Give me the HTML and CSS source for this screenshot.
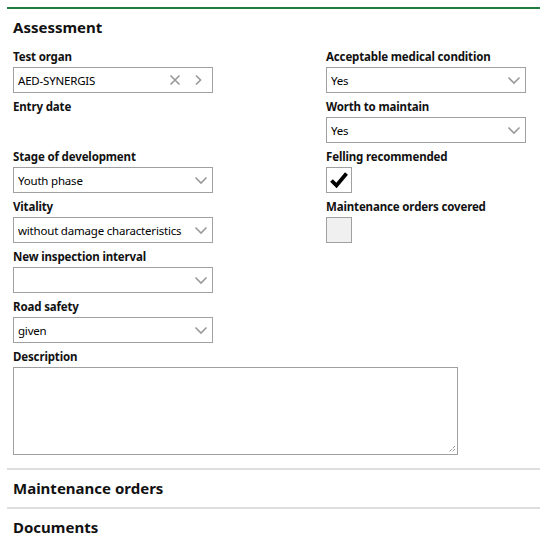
FILE: index.html
```html
<!DOCTYPE html>
<html>
<head>
<meta charset="utf-8">
<link rel="stylesheet" href="styles.css">
</head>
<body>
<div class="page">
  <section class="section section--active">
    <h2 class="section-title">Assessment</h2>
    <div class="form-grid">
      <div class="col">
        <div class="field">
          <div class="label">Test organ</div>
          <div class="input input--lookup">
            <span class="value">AED-SYNERGIS</span>
            <svg class="icon" width="12" height="12" viewBox="0 0 12 12"><path d="M1.5 1.5 L10.5 10.5 M10.5 1.5 L1.5 10.5" stroke="#9a9a9a" stroke-width="1.7" fill="none"/></svg>
            <svg class="icon icon--next" width="12" height="12" viewBox="0 0 12 12"><path d="M3 1.5 L7.5 6 L3 10.5" stroke="#9a9a9a" stroke-width="1.7" fill="none"/></svg>
          </div>
        </div>
        <div class="field">
          <div class="label">Entry date</div>
          <div class="input input--empty"></div>
        </div>
        <div class="field">
          <div class="label">Stage of development</div>
          <div class="input">
            <span class="value">Youth phase</span>
            <svg class="icon icon--chev" width="14" height="12" viewBox="0 0 14 12"><path d="M1.5 3.5 L7 9 L12.5 3.5" stroke="#9a9a9a" stroke-width="1.6" fill="none"/></svg>
          </div>
        </div>
        <div class="field">
          <div class="label">Vitality</div>
          <div class="input">
            <span class="value">without damage characteristics</span>
            <svg class="icon icon--chev" width="14" height="12" viewBox="0 0 14 12"><path d="M1.5 3.5 L7 9 L12.5 3.5" stroke="#9a9a9a" stroke-width="1.6" fill="none"/></svg>
          </div>
        </div>
        <div class="field">
          <div class="label">New inspection interval</div>
          <div class="input">
            <span class="value"></span>
            <svg class="icon icon--chev" width="14" height="12" viewBox="0 0 14 12"><path d="M1.5 3.5 L7 9 L12.5 3.5" stroke="#9a9a9a" stroke-width="1.6" fill="none"/></svg>
          </div>
        </div>
        <div class="field">
          <div class="label">Road safety</div>
          <div class="input">
            <span class="value">given</span>
            <svg class="icon icon--chev" width="14" height="12" viewBox="0 0 14 12"><path d="M1.5 3.5 L7 9 L12.5 3.5" stroke="#9a9a9a" stroke-width="1.6" fill="none"/></svg>
          </div>
        </div>
      </div>
      <div class="col">
        <div class="field">
          <div class="label">Acceptable medical condition</div>
          <div class="input">
            <span class="value">Yes</span>
            <svg class="icon icon--chev" width="14" height="12" viewBox="0 0 14 12"><path d="M1.5 3.5 L7 9 L12.5 3.5" stroke="#9a9a9a" stroke-width="1.6" fill="none"/></svg>
          </div>
        </div>
        <div class="field">
          <div class="label">Worth to maintain</div>
          <div class="input">
            <span class="value">Yes</span>
            <svg class="icon icon--chev" width="14" height="12" viewBox="0 0 14 12"><path d="M1.5 3.5 L7 9 L12.5 3.5" stroke="#9a9a9a" stroke-width="1.6" fill="none"/></svg>
          </div>
        </div>
        <div class="field">
          <div class="label">Felling recommended</div>
          <div class="checkbox checkbox--checked">
            <svg width="20" height="18" viewBox="0 0 20 18"><path d="M2.5 9.5 L7.5 14.5 L17.5 2.5" stroke="#000" stroke-width="3.8" fill="none" stroke-linejoin="miter"/></svg>
          </div>
        </div>
        <div class="field">
          <div class="label">Maintenance orders covered</div>
          <div class="checkbox"></div>
        </div>
      </div>
    </div>
    <div class="field field--wide">
      <div class="label">Description</div>
      <div class="textarea">
        <svg class="grip" width="9" height="9" viewBox="0 0 9 9"><path d="M8 2 L2 8 M8 5 L5 8" stroke="#666" stroke-width="1" stroke-dasharray="1 1" fill="none"/></svg>
      </div>
    </div>
  </section>
  <section class="section">
    <h2 class="section-title">Maintenance orders</h2>
  </section>
  <section class="section">
    <h2 class="section-title">Documents</h2>
  </section>
</div>
</body>
</html>
```
FILE: styles.css
```css
html, body {
  margin: 0;
  padding: 0;
  background: #fff;
}
body {
  font-family: "Noto Sans", "Open Sans", "Liberation Sans", sans-serif;
  color: #111;
}
.page {
  padding: 7px 0 0 7px;
}
.section {
  border-top: 2px solid #dedede;
  padding: 0 6px;
}
.section--active {
  border-top-color: #1e7e3e;
  padding-bottom: 13px;
}
.section-title {
  margin: 0;
  height: 37px;
  line-height: 37px;
  font-size: 15px;
  font-weight: 700;
  color: #111;
}
.section--active .section-title {
  height: 38px;
  line-height: 36px;
}
.form-grid {
  display: grid;
  grid-template-columns: 200px 200px;
  column-gap: 113px;
}
.col {
  display: flex;
  flex-direction: column;
}
.field {
  display: flex;
  flex-direction: column;
  margin-bottom: 4px;
}
.label {
  height: 20px;
  line-height: 20px;
  font-size: 11.5px;
  letter-spacing: -0.15px;
  font-weight: 700;
  color: #111;
  white-space: nowrap;
}
.input {
  box-sizing: border-box;
  height: 26px;
  border: 1px solid #a0a0a0;
  display: flex;
  align-items: center;
  padding: 0 4px 0 4px;
  font-size: 11.5px;
  letter-spacing: -0.2px;
  color: #000;
  background: #fff;
}
.input--lookup {
  padding-right: 7px;
}
.input--empty {
  border-color: transparent;
}
.value {
  flex: 1;
  white-space: nowrap;
  overflow: hidden;
}
.icon {
  flex: none;
  margin-left: 6px;
}
.icon--next {
  margin-left: 12px;
}
.icon--chev {
  margin-left: 8px;
  margin-right: 0;
}
.checkbox {
  box-sizing: border-box;
  width: 26px;
  height: 26px;
  border: 1px solid #a0a0a0;
  background: #f0f0f0;
  display: flex;
  align-items: center;
  justify-content: center;
}
.checkbox--checked {
  background: #fff;
}
.field--wide {
  margin-bottom: 0;
}
.textarea {
  box-sizing: border-box;
  position: relative;
  width: 445px;
  height: 88px;
  border: 1px solid #a0a0a0;
  background: #fff;
}
.grip {
  position: absolute;
  right: 1px;
  bottom: 1px;
}
```
